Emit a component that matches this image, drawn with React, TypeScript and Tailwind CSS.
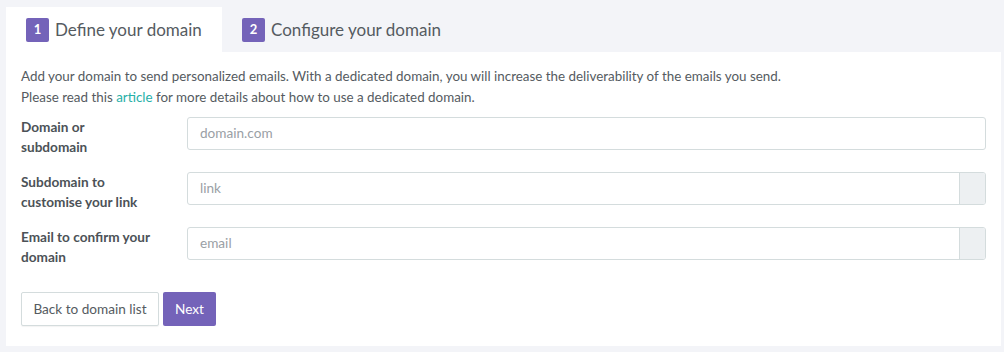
export default function App() {
    const font = { fontFamily: 'Lato, "Open Sans", sans-serif' };

    const rows = [
        { label: ['Domain or', 'subdomain'], placeholder: 'domain.com', addon: false },
        { label: ['Subdomain to', 'customise your link'], placeholder: 'link', addon: true },
        { label: ['Email to confirm your', 'domain'], placeholder: 'email', addon: true },
    ];

    return (
        <div className="w-[1004px] h-[352px] bg-[#f3f4f8] pl-[6px] pr-[3px] pt-[7px] text-[#555b61]" style={font}>
            {/* tabs */}
            <div className="flex h-[45px]">
                <div className="flex items-center bg-white pl-5 pr-5 w-[216px]">
                    <span className="w-[23px] h-[24px] rounded-[2px] bg-[#7463b9] text-white text-[13px] font-bold flex items-center justify-center">1</span>
                    <span className="ml-[6px] text-[17px] text-[#555b61]">Define your domain</span>
                </div>
                <div className="flex items-center pl-5">
                    <span className="w-[23px] h-[24px] rounded-[2px] bg-[#7463b9] text-white text-[13px] font-bold flex items-center justify-center">2</span>
                    <span className="ml-[6px] text-[17px] text-[#555b61]">Configure your domain</span>
                </div>
            </div>

            {/* panel */}
            <div className="bg-white h-[294px] pl-[15px] pr-[15px] pt-[14px]">
                <p className="text-[13.4px] leading-[21px]">
                    Add your domain to send personalized emails. With a dedicated domain, you will increase the deliverability of the emails you send.
                    <br />
                    Please read this <a className="text-[#26b0a8]">article</a> for more details about how to use a dedicated domain.
                </p>

                <div className="mt-[9px] flex flex-col gap-[15px]">
                    {rows.map((r) => (
                        <div key={r.placeholder} className="flex items-start h-[40px]">
                            <div className="w-[166px] text-[13.6px] font-bold leading-[20px] text-[#4c5257]">
                                {r.label[0]}
                                <br />
                                {r.label[1]}
                            </div>
                            <div className="flex w-[799px] h-[33px] border border-[#d4dcdd] rounded-[3px] overflow-hidden">
                                <div className="flex-1 flex items-center pl-3 text-[13.6px] text-[#9aa0a5]">{r.placeholder}</div>
                                {r.addon && <div className="w-[26px] bg-[#edf0f2] border-l border-[#d4dcdd]"></div>}
                            </div>
                        </div>
                    ))}
                </div>

                <div className="mt-[25px] flex gap-[4px]">
                    <button className="h-[34px] w-[138px] border border-[#d4dcdd] rounded-[2px] bg-white text-[13.6px] text-[#555b61] shadow-[0_1px_1px_rgba(0,0,0,0.05)]">
                        Back to domain list
                    </button>
                    <button className="h-[34px] w-[53px] rounded-[2px] bg-[#7463b9] text-[13.6px] text-white">Next</button>
                </div>
            </div>
        </div>
    );
}
